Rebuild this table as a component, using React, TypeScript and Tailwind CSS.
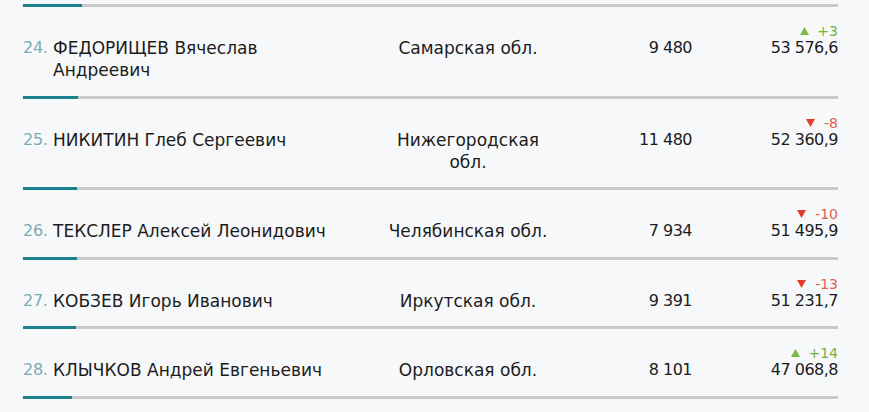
import React from "react";

type Row = {
  n: number;
  name: string;
  region: string;
  votes: string;
  value: string;
  delta: string;
  up: boolean;
  bar: number;
};

const rows: Row[] = [
  { n: 24, name: "ФЕДОРИЩЕВ Вячеслав Андреевич", region: "Самарская обл.", votes: "9 480", value: "53 576,6", delta: "+3", up: true, bar: 55 },
  { n: 25, name: "НИКИТИН Глеб Сергеевич", region: "Нижегородская обл.", votes: "11 480", value: "52 360,9", delta: "-8", up: false, bar: 54 },
  { n: 26, name: "ТЕКСЛЕР Алексей Леонидович", region: "Челябинская обл.", votes: "7 934", value: "51 495,9", delta: "-10", up: false, bar: 54 },
  { n: 27, name: "КОБЗЕВ Игорь Иванович", region: "Иркутская обл.", votes: "9 391", value: "51 231,7", delta: "-13", up: false, bar: 53 },
  { n: 28, name: "КЛЫЧКОВ Андрей Евгеньевич", region: "Орловская обл.", votes: "8 101", value: "47 068,8", delta: "+14", up: true, bar: 49 },
];

function Bar({ w }: { w: number }) {
  return (
    <div className="h-[3px] w-full bg-[#c9cacc]">
      <div className="h-full bg-[#1a7f8e]" style={{ width: w }} />
    </div>
  );
}

function Tri({ up }: { up: boolean }) {
  return up ? (
    <svg width="9" height="8" viewBox="0 0 9 8" className="mr-[8px]">
      <polygon points="4.5,0 9,8 0,8" fill="#7cb84a" />
    </svg>
  ) : (
    <svg width="9" height="8" viewBox="0 0 9 8" className="mr-[9px]">
      <polygon points="0,0 9,0 4.5,8" fill="#e53b2e" />
    </svg>
  );
}

export default function App() {
  return (
    <div
      className="min-h-[412px] w-full bg-[#f7f8fa] text-[#1c1c1c]"
      style={{ fontFamily: '"DejaVu Sans", sans-serif' }}
    >
      <div className="ml-[23px] w-[815px] pt-[4px]">
        <Bar w={59} />
        {rows.map((r) => (
          <div key={r.n}>
            <div className="grid grid-cols-[30px_330px_170px_139px_146px] items-start pt-[30px] pb-[14.5px] text-[17px] leading-[22px]">
              <div className="text-[16px] tracking-[-0.3px] text-[#79adb3]">{r.n}.</div>
              <div className="pr-[30px]">{r.name}</div>
              <div className="text-center">{r.region}</div>
              <div className="text-right text-[16px] tracking-[-0.5px]">{r.votes}</div>
              <div className="-mt-[12px] flex flex-col items-end">
                <div
                  className={
                    "flex h-[12px] items-center text-[14px] leading-[12px] " +
                    (r.up ? "text-[#72b13f]" : "text-[#e2604f]")
                  }
                >
                  <Tri up={r.up} />
                  <span>{r.delta}</span>
                </div>
                <div className="text-[16px] tracking-[-0.5px]">{r.value}</div>
              </div>
            </div>
            <Bar w={r.bar} />
          </div>
        ))}
      </div>
    </div>
  );
}
